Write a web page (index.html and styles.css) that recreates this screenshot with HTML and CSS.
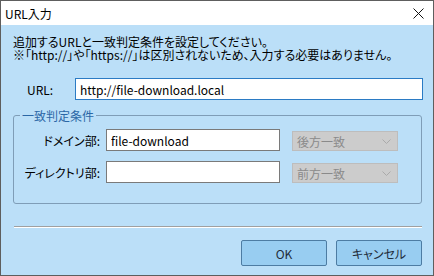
FILE: index.html
```html
<!DOCTYPE html>
<html lang="ja">
<head>
    <meta charset="UTF-8">
    <title>URL入力</title>
    <link rel="stylesheet" href="styles.css">
</head>
<body>
    <div class="window">
        <!-- Title bar -->
        <div class="titlebar">
            <span class="title">URL入力</span>
            <svg class="close" width="11" height="11" viewBox="0 0 11 11">
                <path d="M0.5 0.5 L10.5 10.5 M10.5 0.5 L0.5 10.5" stroke="#111" stroke-width="1" fill="none"/>
            </svg>
        </div>

        <!-- Dialog body -->
        <div class="content">
            <div class="message">
                <div>追加するURLと一致判定条件を設定してください。</div>
                <div>※「http://」や「https://」は区別されないため、入力する必要はありません。</div>
            </div>

            <div class="url-row">
                <label class="url-label" for="url">URL:</label>
                <input class="text-input focused" type="text" id="url" value="http://file-download.local">
            </div>

            <fieldset class="match-group">
                <legend>一致判定条件</legend>
                <div class="match-row">
                    <label class="row-label" for="domain">ドメイン部:</label>
                    <input class="text-input field" type="text" id="domain" value="file-download">
                    <div class="select disabled">
                        <span>後方一致</span>
                        <svg width="9" height="5" viewBox="0 0 9 5"><path d="M0.5 0.5 L4.5 4.5 L8.5 0.5" stroke="#aaa" fill="none"/></svg>
                    </div>
                </div>
                <div class="match-row">
                    <label class="row-label" for="dir">ディレクトリ部:</label>
                    <input class="text-input field" type="text" id="dir" value="">
                    <div class="select disabled">
                        <span>前方一致</span>
                        <svg width="9" height="5" viewBox="0 0 9 5"><path d="M0.5 0.5 L4.5 4.5 L8.5 0.5" stroke="#aaa" fill="none"/></svg>
                    </div>
                </div>
            </fieldset>

            <div class="separator"></div>

            <div class="buttons">
                <div class="button ok">OK</div>
                <div class="button">キャンセル</div>
            </div>
        </div>
    </div>
</body>
</html>
```

FILE: styles.css
```css
/* Base */
body {
    margin: 0;
    font-family: "Noto Sans CJK JP", "Noto Sans", sans-serif;
    font-size: 12px;
    line-height: 13px;
    font-feature-settings: "palt";
    color: #000;
    background: #fff;
}

/* Window frame */
.window {
    width: 434px;
    height: 276px;
    box-sizing: border-box;
    border: 1px solid #5e5e5e;
    background: #bbdff8;
    display: flex;
    flex-direction: column;
    overflow: hidden;
}

/* Title bar */
.titlebar {
    flex: none;
    height: 24px;
    background: #fff;
    display: flex;
    align-items: center;
    justify-content: space-between;
    padding: 0 9px 0 4px;
}

.title {
    font-size: 12px;
    color: #000;
}

.close {
    display: block;
}

/* Content */
.content {
    padding: 11px 10px 0 12px;
}

.message {
    color: #000;
    white-space: nowrap;
}

.message div {
    height: 12px;
    line-height: 12px;
}

.message div + div {
    margin-top: 1px;
}

.url-row {
    display: flex;
    align-items: center;
    margin-top: 17px;
}

.url-label {
    width: 48px;
    padding-left: 14px;
}

.text-input {
    box-sizing: border-box;
    height: 22px;
    margin: 0;
    padding: 0 4px;
    border: 1px solid #7a7a7a;
    background: #fff;
    font-family: "Noto Sans CJK JP", "Noto Sans", sans-serif;
    font-size: 12px;
    color: #000;
    outline: none;
}

.text-input.focused {
    flex: 1;
    border-color: #2b7bc4;
}

/* Group box */
.match-group {
    margin: 9px 1px 0 0;
    padding: 7px 0 20px 0;
    border: 1px solid #7f9db7;
    border-radius: 3px;
}

.match-group legend {
    margin-left: 6px;
    padding: 0 2px;
    color: #2b67a6;
}

.match-row {
    display: flex;
    align-items: center;
    margin-bottom: 10px;
}

.match-row:last-child {
    margin-bottom: 0;
}

.row-label {
    flex: none;
    width: 86px;
    text-align: right;
    margin-right: 6px;
    white-space: nowrap;
}

.text-input.field {
    width: 174px;
}

.select {
    box-sizing: border-box;
    width: 106px;
    height: 20px;
    margin-left: 12px;
    margin-top: 2px;
    display: flex;
    align-items: center;
    justify-content: space-between;
    padding: 0 6px 0 4px;
}

.select.disabled {
    background: #cccccc;
    border: 1px solid #bdbdbd;
    color: #8a8a8a;
}

/* Separator */
.separator {
    margin: 22px 0 0 1px;
    width: 408px;
    height: 1px;
    background: #a0a0a0;
    border-bottom: 1px solid #fff;
}

/* Buttons */
.buttons {
    display: flex;
    justify-content: flex-end;
    gap: 9px;
    margin: 12px 1px 0 0;
}

.button {
    box-sizing: border-box;
    width: 86px;
    height: 26px;
    border: 1px solid #4d7ca3;
    border-radius: 2px;
    background: #98cdf1;
    color: #1e2c3a;
    display: flex;
    align-items: center;
    justify-content: center;
}
```
